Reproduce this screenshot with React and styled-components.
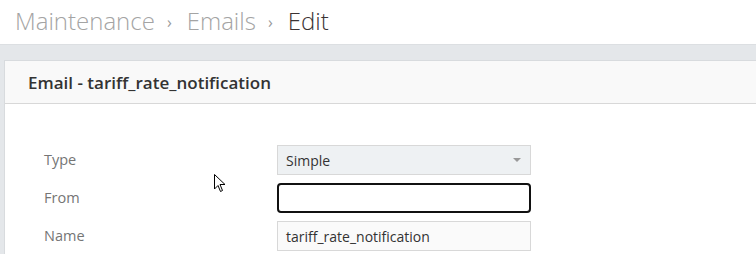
import React from 'react';
import styled, { createGlobalStyle } from 'styled-components';

const GlobalStyle = createGlobalStyle`
  html, body {
    margin: 0;
    padding: 0;
    background: #e4e7ea;
    font-family: "Open Sans", "Liberation Sans", sans-serif;
    overflow: hidden;
  }
`

const Page = styled.div`
  width: 756px;
  height: 254px;
  position: relative;
  overflow: hidden;
`

const TopBar = styled.div`
  height: 44px;
  background: #fff;
  border-bottom: 1px solid #dcdfe2;
  display: flex;
  align-items: center;
  padding-left: 15px;
  box-sizing: content-box;
`

const Crumb = styled.span`
  font-size: 24px;
  font-weight: 300;
  color: ${props => props.active ? '#3a3333' : '#a4a4a4'};
  line-height: 1;
  margin-top: -2px;
`

const Sep = styled.span`
  font-size: 16px;
  color: #999;
  margin: 0 15px 0 12px;
`

const Content = styled.div`
  padding: 15px 0 0 4px;
`

const Panel = styled.div`
  background: #fff;
  border: 1px solid #d8dbde;
  border-right: none;
  width: 800px;
  height: 300px;
`

const PanelHeader = styled.div`
  height: 42px;
  background: #f9f9f9;
  border-bottom: 1px solid #d8d8d8;
  display: flex;
  align-items: center;
  padding-left: 23px;
`

const PanelTitle = styled.span`
  font-size: 17px;
  font-weight: 600;
  color: #333;
`

const Form = styled.div`
  padding: 41px 0 0 39px;
  display: flex;
  flex-direction: column;
  gap: 8px;
`

const Row = styled.div`
  display: flex;
  align-items: center;
`

const Label = styled.label`
  width: 233px;
  font-size: 14.5px;
  color: #757575;
  margin-top: -1px;
`

const Field = styled.div`
  width: 254px;
  height: 30px;
  box-sizing: border-box;
  border: ${props => props.focused ? '2px solid #111' : '1px solid #d8d8d8'};
  border-radius: ${props => props.focused ? '4px' : '0'};
  background: ${props => props.bg || '#fff'};
  display: flex;
  align-items: center;
  justify-content: space-between;
  padding: 0 9px 0 8px;
  font-size: 14px;
  color: #333;
`

const Caret = styled.span`
  width: 0;
  height: 0;
  border-left: 4px solid transparent;
  border-right: 4px solid transparent;
  border-top: 4px solid #999;
`

const Cursor = styled.svg`
  position: absolute;
  left: 214px;
  top: 174px;
`

export default function App() {
  return (
    <Page>
      <GlobalStyle />
      <TopBar>
        <Crumb>Maintenance</Crumb>
        <Sep>›</Sep>
        <Crumb>Emails</Crumb>
        <Sep>›</Sep>
        <Crumb active>Edit</Crumb>
      </TopBar>
      <Content>
        <Panel>
          <PanelHeader>
            <PanelTitle>Email - tariff_rate_notification</PanelTitle>
          </PanelHeader>
          <Form>
            <Row>
              <Label>Type</Label>
              <Field bg="#eef1f3">
                <span>Simple</span>
                <Caret />
              </Field>
            </Row>
            <Row>
              <Label>From</Label>
              <Field focused />
            </Row>
            <Row>
              <Label>Name</Label>
              <Field bg="#fafafa">tariff_rate_notification</Field>
            </Row>
          </Form>
        </Panel>
      </Content>
      <Cursor width="12" height="19" viewBox="0 0 12 19">
        <path d="M0.5 0.5 L0.5 15 L4 11.5 L6.5 17.5 L8.5 16.5 L6 10.5 L11 10.5 Z" fill="#fff" stroke="#000" strokeWidth="1" strokeLinejoin="miter" />
      </Cursor>
    </Page>
  );
}
